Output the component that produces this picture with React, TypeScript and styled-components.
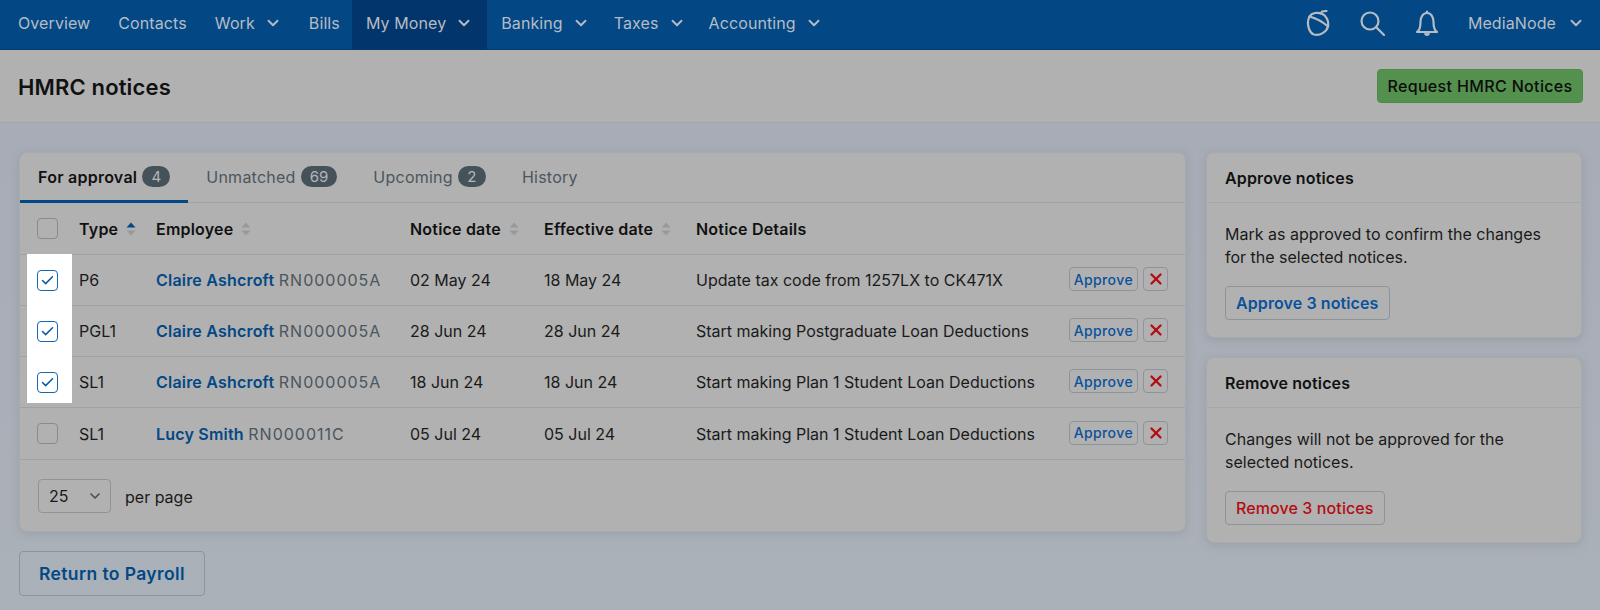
import styled, { createGlobalStyle } from 'styled-components';
import { ChevronDown, X, Check } from 'lucide-react';

const FONT = 'Inter, "Liberation Sans", sans-serif';

const GlobalStyle = createGlobalStyle`
  html, body { margin: 0; padding: 0; }
  body {
    width: 1600px;
    height: 610px;
    overflow: hidden;
    background: linear-gradient(#a6abb5, #abb1b9);
    font-family: ${FONT};
    font-size: 16px;
    color: #111;
  }
`;

const Nav = styled.nav`
  display: flex;
  align-items: stretch;
  height: 50px;
  padding: 0 15px 0 4px;
  background: #034885;
  border-bottom: 1px solid #033868;
  box-sizing: border-box;
  color: #b6bcc4;
  font-size: 16px;
`;

const NavItem = styled.a<{ $active?: boolean; $trim?: number }>`
  display: flex;
  align-items: center;
  gap: 9px;
  padding: 0 ${p => 14 - (p.$trim ?? 0)}px 3px 14px;
  background: ${p => (p.$active ? '#02356b' : 'transparent')};
  letter-spacing: 0.1px;
`;

const NavRight = styled.div`
  display: flex;
  align-items: center;
  gap: 30px;
  margin-left: auto;
  padding-bottom: 3px;
`;

const Account = styled.span`
  display: flex;
  align-items: center;
  gap: 11px;
  margin-left: -1px;
  letter-spacing: 0.1px;
`;

const PageHead = styled.header`
  display: flex;
  align-items: center;
  justify-content: space-between;
  height: 72px;
  padding: 0 17px 0 18px;
  background: #b1b1b1;
  border-bottom: 1px solid #a2a7af;
`;

const Title = styled.h1`
  margin: 1px 0 0;
  font-size: 22px;
  font-weight: 600;
  letter-spacing: 0.15px;
`;

const RequestButton = styled.button`
  height: 34px;
  width: 206px;
  padding: 0;
  background: #54904e;
  border: 1px solid #4f8a4a;
  border-radius: 4px;
  color: #0c0c0c;
  font: 500 16px ${FONT};
  letter-spacing: 0.35px;
`;

const Main = styled.main`
  display: grid;
  grid-template-columns: 1167px 376px;
  gap: 20px;
  align-items: start;
  padding: 29px 18px 0 19px;
`;

const Column = styled.div`
  display: flex;
  flex-direction: column;
  align-items: flex-start;
  gap: 19px;
`;

const Card = styled.section`
  width: 100%;
  box-sizing: border-box;
  background: #b1b1b1;
  border: 1px solid #a7aaaf;
  border-radius: 8px;
  box-shadow: 0 2px 8px rgba(120, 125, 135, 0.35);
`;

const Tabs = styled.div`
  display: flex;
  height: 50px;
  border-bottom: 1px solid #9fa2a6;
  box-sizing: border-box;
`;

const Tab = styled.div<{ $active?: boolean }>`
  display: flex;
  align-items: center;
  gap: 5px;
  padding: 0 18px;
  margin-bottom: -1px;
  border-bottom: 3px solid ${p => (p.$active ? '#034885' : 'transparent')};
  color: ${p => (p.$active ? '#111' : '#4b565e')};
  font-weight: ${p => (p.$active ? 600 : 400)};
  font-size: 16px;
  letter-spacing: 0.25px;
`;

const Badge = styled.span`
  display: inline-flex;
  align-items: center;
  justify-content: center;
  min-width: 28px;
  height: 21px;
  padding: 0 9px;
  box-sizing: border-box;
  border-radius: 11px;
  background: #46525a;
  color: #b3b7ba;
  font-size: 15px;
  font-weight: 400;
  letter-spacing: 0;
`;

const TableWrap = styled.div`
  position: relative;
`;

const Spotlight = styled.div`
  position: absolute;
  z-index: 1;
  left: 7px;
  top: 51px;
  width: 45px;
  height: 149px;
  background: #fff;
`;

const Table = styled.table`
  width: 100%;
  table-layout: fixed;
  border-collapse: collapse;
  font-size: 16px;
`;

const Th = styled.th<{ $w?: number }>`
  width: ${p => (p.$w ? `${p.$w}px` : 'auto')};
  height: 51px;
  padding: 0;
  text-align: left;
  font-weight: 600;
  letter-spacing: 0.2px;
  border-bottom: 1px solid #9fa2a6;
`;

const Td = styled.td`
  height: 50px;
  padding: 0;
  color: #1a1a1a;
  white-space: nowrap;
  border-bottom: 1px solid #9fa2a6;
  tr:last-child > & {
    height: 51px;
  }
`;

const CheckCell = styled.div`
  position: relative;
  z-index: 2;
  display: flex;
  padding-left: 17px;
`;

const Box = styled.span<{ $checked?: boolean }>`
  display: flex;
  align-items: center;
  justify-content: center;
  width: 21px;
  height: 21px;
  box-sizing: border-box;
  border: 1px solid ${p => (p.$checked ? '#1467b5' : '#858c91')};
  border-radius: 4px;
  background: ${p => (p.$checked ? '#fff' : 'transparent')};
  color: #0d5ba6;
`;

const HeadLabel = styled.span`
  display: inline-flex;
  align-items: center;
  gap: 8px;
`;

const Name = styled.a`
  color: #034885;
  font-weight: 600;
  letter-spacing: 0.2px;
`;

const Ref = styled.span`
  color: #4b565e;
  letter-spacing: 1px;
`;

const Actions = styled.div`
  display: flex;
  justify-content: flex-end;
  gap: 5px;
  padding-right: 17px;
`;

const SmallButton = styled.button`
  display: flex;
  align-items: center;
  justify-content: center;
  height: 24px;
  margin-top: -2px;
  padding: 0 4px;
  box-sizing: border-box;
  background: transparent;
  border: 1px solid #8d949a;
  border-radius: 4px;
  color: #0a529b;
  font: 500 14px ${FONT};
  letter-spacing: 0.4px;
`;

const RemoveButton = styled(SmallButton)`
  width: 25px;
  padding: 0;
  color: #b30d12;
`;

const Footer = styled.div`
  display: flex;
  align-items: center;
  gap: 14px;
  height: 71px;
  padding-left: 18px;
`;

const PageSelect = styled.div`
  display: flex;
  align-items: center;
  justify-content: space-between;
  width: 73px;
  height: 34px;
  padding: 0 7px 0 10px;
  box-sizing: border-box;
  border: 1px solid #8d949a;
  border-radius: 4px;
  color: #46525a;
`;

const PageSize = styled.span`
  color: #1a1a1a;
`;

const PerPage = styled.span`
  margin-top: 3px;
  color: #1a1a1a;
`;

const ReturnButton = styled.button`
  width: 186px;
  height: 45px;
  padding: 0;
  background: transparent;
  border: 1px solid #8d949a;
  border-radius: 4px;
  color: #034885;
  font: 600 17.5px ${FONT};
  letter-spacing: 0.4px;
`;

const SideHead = styled.h2`
  display: flex;
  align-items: center;
  height: 50px;
  margin: 0;
  padding: 0 18px;
  box-sizing: border-box;
  border-bottom: 1px solid #a4a7ab;
  font-size: 16px;
  font-weight: 600;
  letter-spacing: 0.15px;
`;

const SideBody = styled.div`
  padding: 20px 18px 17px;
`;

const SideText = styled.p`
  width: 330px;
  margin: 0 0 17px;
  font-size: 16px;
  line-height: 23px;
  color: #1a1a1a;
`;

const SideButton = styled.button<{ $danger?: boolean }>`
  display: block;
  height: 34px;
  padding: 0 10px;
  background: transparent;
  border: 1px solid #8d949a;
  border-radius: 4px;
  color: ${p => (p.$danger ? '#b30d12' : '#0a529b')};
  font: ${p => (p.$danger ? 500 : 600)} 16px ${FONT};
  letter-spacing: 0.1px;
`;

function Acorn() {
  return (
    <svg width="24" height="26" viewBox="0 0 24 26" fill="none" stroke="currentColor" strokeWidth="2.2" strokeLinecap="round" strokeLinejoin="round">
      <path d="M3.500 6.500 C6 2.500 12 2 16.500 4 C20.500 6 23 11 22 16.500 C20.500 22 14 26 8 24.500 C3 23 0 13 3.500 6.500 Z" />
      <path d="M3.500 6.500 C9 8 17 12 22 16.500" />
      <path d="M15 3.500 L16 1.500 L20.500 1" />
    </svg>
  );
}

function Magnifier() {
  return (
    <svg width="25" height="25" viewBox="0 0 25 25" fill="none" stroke="currentColor" strokeWidth="2.2" strokeLinecap="round">
      <circle cx="10" cy="10" r="8.500" />
      <path d="M16.500 16.500 L24 24" />
    </svg>
  );
}

function Bell() {
  return (
    <svg width="24" height="27" viewBox="0 0 24 27" fill="none" stroke="currentColor" strokeWidth="2.2" strokeLinecap="round" strokeLinejoin="round">
      <path d="M2 22 C4.500 20.500 5.500 18 5.500 12 C5.500 7 8 3 12 3 C16 3 18.500 7 18.500 12 C18.500 18 19.500 20.500 22 22 Z" />
      <path d="M12 1.500 V3" />
      <path d="M9.500 24 C10 26 14 26 14.500 24 Z" fill="currentColor" strokeWidth="1" />
    </svg>
  );
}

function SortIcon({ up }: { up?: boolean }) {
  return (
    <svg width="10" height="14" viewBox="0 0 10 14">
      <path d="M5 0.500 L9.500 5.500 H0.500 Z" fill={up ? '#034885' : '#959a9e'} />
      <path d="M5 13.500 L9.500 8.500 H0.500 Z" fill="#959a9e" />
    </svg>
  );
}

const rows = [
  { type: 'P6', name: 'Claire Ashcroft', ref: 'RN000005A', notice: '02 May 24', effective: '18 May 24', details: 'Update tax code from 1257LX to CK471X', checked: true },
  { type: 'PGL1', name: 'Claire Ashcroft', ref: 'RN000005A', notice: '28 Jun 24', effective: '28 Jun 24', details: 'Start making Postgraduate Loan Deductions', checked: true },
  { type: 'SL1', name: 'Claire Ashcroft', ref: 'RN000005A', notice: '18 Jun 24', effective: '18 Jun 24', details: 'Start making Plan 1 Student Loan Deductions', checked: true },
  { type: 'SL1', name: 'Lucy Smith', ref: 'RN000011C', notice: '05 Jul 24', effective: '05 Jul 24', details: 'Start making Plan 1 Student Loan Deductions', checked: false },
];

export default function App() {
  return (
    <>
      <GlobalStyle />
      <Nav>
        <NavItem>Overview</NavItem>
        <NavItem>Contacts</NavItem>
        <NavItem $trim={1}>Work <ChevronDown size={18} strokeWidth={2.5} /></NavItem>
        <NavItem $trim={2}>Bills</NavItem>
        <NavItem $active>My Money <ChevronDown size={18} strokeWidth={2.5} /></NavItem>
        <NavItem $trim={4}>Banking <ChevronDown size={18} strokeWidth={2.5} /></NavItem>
        <NavItem $trim={5}>Taxes <ChevronDown size={18} strokeWidth={2.5} /></NavItem>
        <NavItem>Accounting <ChevronDown size={18} strokeWidth={2.5} /></NavItem>
        <NavRight>
          <Acorn />
          <Magnifier />
          <Bell />
          <Account>MediaNode <ChevronDown size={18} strokeWidth={2.5} /></Account>
        </NavRight>
      </Nav>
      <PageHead>
        <Title>HMRC notices</Title>
        <RequestButton>Request HMRC Notices</RequestButton>
      </PageHead>
      <Main>
        <Column>
          <Card>
            <Tabs>
              <Tab $active>For approval <Badge>4</Badge></Tab>
              <Tab>Unmatched <Badge>69</Badge></Tab>
              <Tab>Upcoming <Badge>2</Badge></Tab>
              <Tab>History</Tab>
            </Tabs>
            <TableWrap>
              <Spotlight />
              <Table>
                <thead>
                  <tr>
                    <Th $w={59}><CheckCell><Box /></CheckCell></Th>
                    <Th $w={77}><HeadLabel>Type <SortIcon up /></HeadLabel></Th>
                    <Th $w={254}><HeadLabel>Employee <SortIcon /></HeadLabel></Th>
                    <Th $w={134}><HeadLabel>Notice date <SortIcon /></HeadLabel></Th>
                    <Th $w={152}><HeadLabel>Effective date <SortIcon /></HeadLabel></Th>
                    <Th $w={360}>Notice Details</Th>
                    <Th />
                  </tr>
                </thead>
                <tbody>
                  {rows.map((r, i) => (
                    <tr key={i}>
                      <Td>
                        <CheckCell>
                          <Box $checked={r.checked}>{r.checked && <Check size={15} strokeWidth={2.5} />}</Box>
                        </CheckCell>
                      </Td>
                      <Td>{r.type}</Td>
                      <Td><Name>{r.name}</Name> <Ref>{r.ref}</Ref></Td>
                      <Td>{r.notice}</Td>
                      <Td>{r.effective}</Td>
                      <Td>{r.details}</Td>
                      <Td>
                        <Actions>
                          <SmallButton>Approve</SmallButton>
                          <RemoveButton><X size={18} strokeWidth={3} /></RemoveButton>
                        </Actions>
                      </Td>
                    </tr>
                  ))}
                </tbody>
              </Table>
            </TableWrap>
            <Footer>
              <PageSelect><PageSize>25</PageSize><ChevronDown size={16} strokeWidth={2.5} /></PageSelect>
              <PerPage>per page</PerPage>
            </Footer>
          </Card>
          <ReturnButton>Return to Payroll</ReturnButton>
        </Column>
        <Column>
          <Card>
            <SideHead>Approve notices</SideHead>
            <SideBody>
              <SideText>Mark as approved to confirm the changes for the selected notices.</SideText>
              <SideButton>Approve 3 notices</SideButton>
            </SideBody>
          </Card>
          <Card>
            <SideHead>Remove notices</SideHead>
            <SideBody>
              <SideText>Changes will not be approved for the selected notices.</SideText>
              <SideButton $danger>Remove 3 notices</SideButton>
            </SideBody>
          </Card>
        </Column>
      </Main>
    </>
  );
}
